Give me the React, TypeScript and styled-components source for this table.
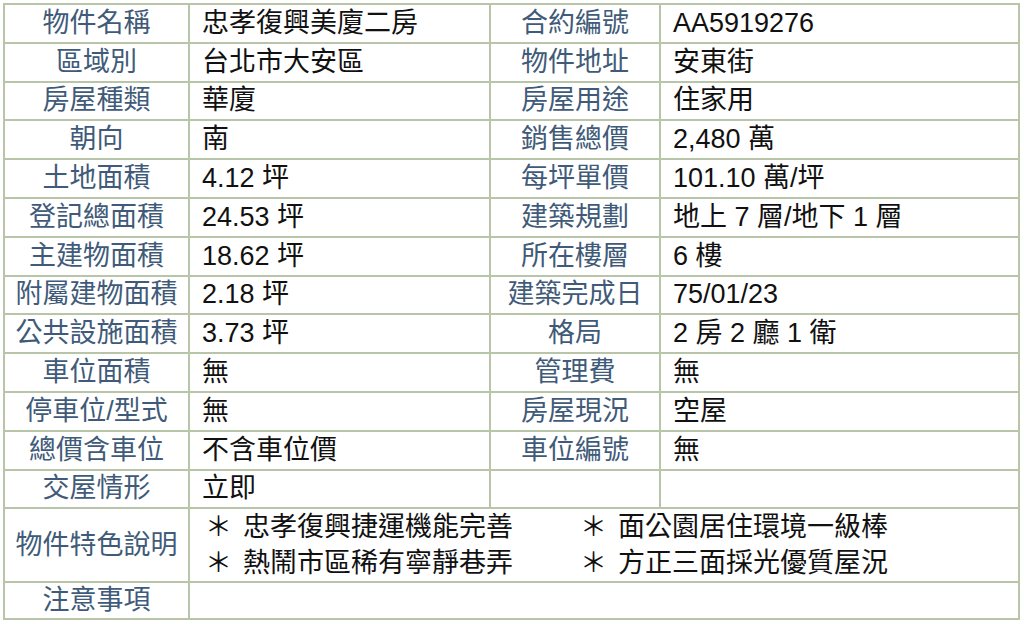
import styled, { createGlobalStyle } from 'styled-components';

const GlobalStyle = createGlobalStyle`
  html, body {
    margin: 0;
    padding: 0;
    background: #ffffff;
  }
  body {
    font-family: 'Liberation Sans', 'Noto Sans CJK TC', sans-serif;
  }
`;

const Sheet = styled.div`
  margin: 3px 0 0 3px;
  width: 1017px;
  display: grid;
  grid-template-columns: 183px 299px 168px 357px;
  grid-template-rows: repeat(13, 36.8px) 72px 35px;
  gap: 2px;
  padding: 2px;
  box-sizing: border-box;
  background: #b8c5a8;
`;

const Label = styled.div`
  background: #ffffff;
  display: flex;
  align-items: center;
  justify-content: center;
  color: #3f5b79;
  font-size: 27px;
  line-height: 1;
  white-space: nowrap;
`;

const Value = styled.div`
  background: #ffffff;
  display: flex;
  align-items: center;
  padding-left: 12px;
  color: #111111;
  font-size: 27px;
  line-height: 1;
  white-space: nowrap;
`;

const Features = styled.div`
  grid-column: span 3;
  background: #ffffff;
  display: grid;
  grid-template-columns: 375px auto;
  align-content: center;
  padding-left: 15px;
  color: #111111;
  font-size: 27px;
  line-height: 36px;
`;

const Feature = styled.div`
  display: flex;
  align-items: center;
  white-space: nowrap;
`;

const Star = styled.span`
  display: inline-block;
  width: 38px;
`;

const Blank = styled.div`
  grid-column: span 3;
  background: #ffffff;
`;

type Row = [string, string, string, string];

const rows: Row[] = [
  ['物件名稱', '忠孝復興美廈二房', '合約編號', 'AA5919276'],
  ['區域別', '台北市大安區', '物件地址', '安東街'],
  ['房屋種類', '華廈', '房屋用途', '住家用'],
  ['朝向', '南', '銷售總價', '2,480 萬'],
  ['土地面積', '4.12 坪', '每坪單價', '101.10 萬/坪'],
  ['登記總面積', '24.53 坪', '建築規劃', '地上 7 層/地下 1 層'],
  ['主建物面積', '18.62 坪', '所在樓層', '6 樓'],
  ['附屬建物面積', '2.18 坪', '建築完成日', '75/01/23'],
  ['公共設施面積', '3.73 坪', '格局', '2 房 2 廳 1 衛'],
  ['車位面積', '無', '管理費', '無'],
  ['停車位/型式', '無', '房屋現況', '空屋'],
  ['總價含車位', '不含車位價', '車位編號', '無'],
  ['交屋情形', '立即', '', ''],
];

const features = [
  '忠孝復興捷運機能完善',
  '面公園居住環境一級棒',
  '熱鬧市區稀有寧靜巷弄',
  '方正三面採光優質屋況',
];

const App = () => {
  return (
    <>
      <GlobalStyle />
      <Sheet>
        {rows.map(([l1, v1, l2, v2], i) => [
          <Label key={`a${i}`}>{l1}</Label>,
          <Value key={`b${i}`}>{v1}</Value>,
          <Label key={`c${i}`}>{l2}</Label>,
          <Value key={`d${i}`}>{v2}</Value>,
        ])}
        <Label>物件特色說明</Label>
        <Features>
          {features.map((f) => (
            <Feature key={f}>
              <Star>＊</Star>
              {f}
            </Feature>
          ))}
        </Features>
        <Label>注意事項</Label>
        <Blank />
      </Sheet>
    </>
  );
};

export default App;
